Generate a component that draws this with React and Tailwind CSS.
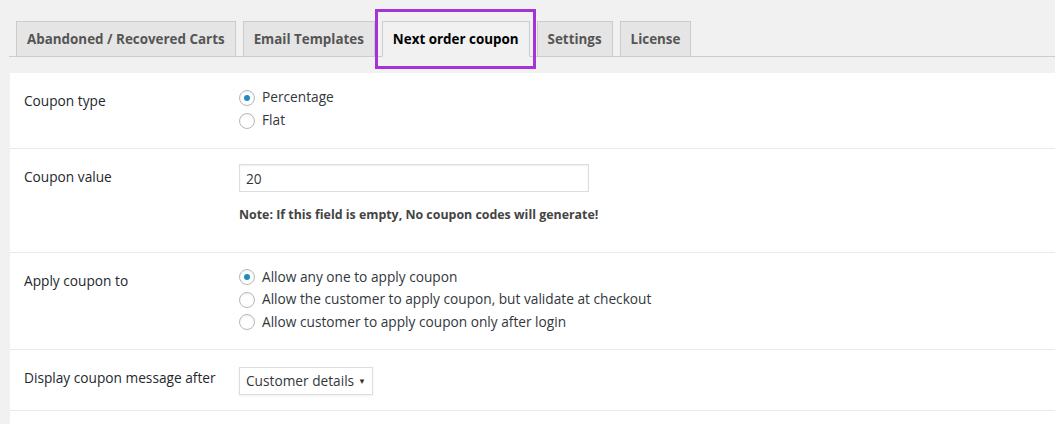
import React, { useState } from 'react';

const tabs = ['Abandoned / Recovered Carts', 'Email Templates', 'Next order coupon', 'Settings', 'License'];

function Radio({ checked, label, onClick, tall }) {
  return (
    <label onClick={onClick} className={`flex items-center gap-[7px] cursor-pointer ${tall ? 'h-[23px]' : 'h-[22.5px]'}`}>
      <span className="w-[16px] h-[16px] rounded-full border border-[#b4b9be] bg-white flex items-center justify-center shadow-[inset_0_1px_2px_rgba(0,0,0,0.07)]">
        {checked && <span className="w-[6px] h-[6px] rounded-full bg-[#1e8cbe]" />}
      </span>
      <span className="text-[13.7px] text-[#32373c]">{label}</span>
    </label>
  );
}

function Row({ label, height, children, contentPt }) {
  return (
    <div className={`flex border-b border-[#e9e9e9] ${height}`}>
      <div className="w-[229px] pl-[14px] pt-[18px] text-[13.7px] leading-[20px] text-[#23282d]">{label}</div>
      <div className={contentPt}>{children}</div>
    </div>
  );
}

export default function App() {
  const [type, setType] = useState('percentage');
  const [apply, setApply] = useState(0);
  const [value, setValue] = useState('20');

  return (
    <div className="h-[424px] overflow-hidden bg-[#f1f1f1] pl-[9px] pt-[21px]" style={{ fontFamily: '"Open Sans", "Noto Sans", sans-serif' }}>
      {/* tabs */}
      <div className="flex gap-[7px] pl-[7px] border-b border-[#ccc] h-[36px]">
        {tabs.map((t) => {
          const active = t === 'Next order coupon';
          return (
            <div key={t} className="relative">
              <div
                className={`h-[36px] px-[10px] flex items-center text-[13.4px] font-bold border border-[#ccc] ${
                  active ? 'bg-[#f1f1f1] text-black border-b-[#f1f1f1]' : 'bg-[#e5e5e5] text-[#555]'
                }`}
              >
                {t}
              </div>
              {active && (
                <div className="absolute -left-[7px] -right-[6px] -top-[12px] h-[60px] border-[3px] border-[#a533d6] pointer-events-none" />
              )}
            </div>
          );
        })}
      </div>

      {/* panel */}
      <div className="mt-[16px] ml-px bg-white">
        <Row label="Coupon type" height="h-[76px]" contentPt="pt-[13px]">
          <Radio tall checked={type === 'percentage'} label="Percentage" onClick={() => setType('percentage')} />
          <Radio tall checked={type === 'flat'} label="Flat" onClick={() => setType('flat')} />
        </Row>

        <Row label="Coupon value" height="h-[104px]" contentPt="pt-[15px]">
          <input
            value={value}
            onChange={(e) => setValue(e.target.value)}
            className="block w-[350px] h-[28px] border border-[#ddd] px-[6px] text-[13.7px] text-[#32373c] outline-none shadow-[inset_0_1px_2px_rgba(0,0,0,0.07)]"
          />
          <p className="mt-[13px] text-[12.4px] font-bold leading-[20px] text-[#444]">
            Note: If this field is empty, No coupon codes will generate!
          </p>
        </Row>

        <Row label="Apply coupon to" height="h-[97px]" contentPt="pt-[13px]">
          {['Allow any one to apply coupon', 'Allow the customer to apply coupon, but validate at checkout', 'Allow customer to apply coupon only after login'].map((l, i) => (
            <Radio key={l} checked={apply === i} label={l} onClick={() => setApply(i)} />
          ))}
        </Row>

        <Row label="Display coupon message after" height="h-[61px]" contentPt="pt-[17px]">
          <div className="w-[134px] h-[28px] border border-[#ddd] flex items-center justify-between pl-[6px] pr-[6px] text-[13.7px] text-[#32373c] shadow-[0_1px_2px_rgba(0,0,0,0.07)]">
            <span>Customer details</span>
            <span className="text-[8px] text-[#333]">▼</span>
          </div>
        </Row>

        <div className="h-[40px]" />
      </div>
    </div>
  );
}
